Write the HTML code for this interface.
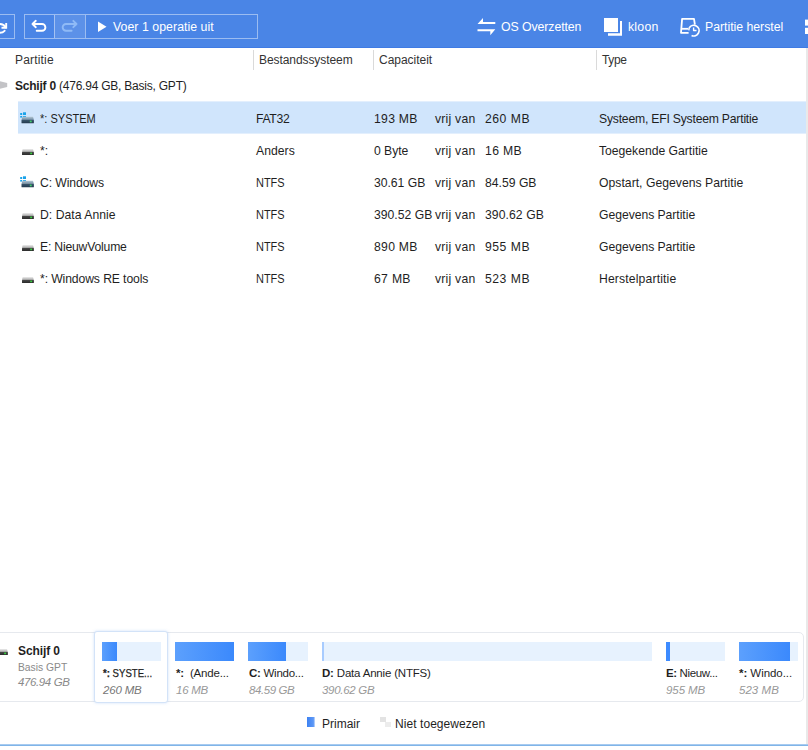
<!DOCTYPE html>
<html><head><meta charset="utf-8">
<style>
*{box-sizing:border-box;margin:0;padding:0}
html,body{width:808px;height:750px;overflow:hidden;background:#fff;font-family:"Liberation Sans",sans-serif;font-size:12px;color:#1f1f1f}
.a{position:absolute;white-space:nowrap}
#tb{position:absolute;left:0;top:0;width:808px;height:48px;background:#4a85e6;border-bottom:1px solid #3f7be4}
.btn{position:absolute;border:1px solid rgba(255,255,255,0.45)}
.wt{color:#fff;font-size:12.3px}
.hdr{color:#333;font-size:12px}
.hdr2{color:#1f1f1f;font-size:12px}
.sep{position:absolute;top:50px;width:1px;height:20px;background:#dadada}
.row{position:absolute;left:0;width:808px;height:32px}
.sel{background:#d0e5fc;height:33px;border-top:1px solid #e3effd;border-bottom:1px solid #e3effd}
.ic{position:absolute;left:18px}
.t{font-size:12.2px;color:#1f1f1f}
.bar{position:absolute;top:642px;height:19px;background:#e7f2fe}
.bar i{position:absolute;left:0;top:0;height:19px;background:linear-gradient(90deg,#5ca0fd,#3b89fc)}
.dn{font-size:12px;font-weight:bold;color:#1f1f1f}
.dg{font-size:11.5px;color:#8a8a8a}
.dgi{font-size:11.5px;color:#8a8a8a;font-style:italic}
.lbl{font-size:11.5px;color:#1f1f1f}
.sz{font-size:11.5px;color:#999;font-style:italic}
.sel2{color:#777}
.lg{font-size:12px;color:#1f1f1f}
</style></head><body>
<svg width="0" height="0" style="position:absolute">
<defs>
<linearGradient id="gt" x1="0" y1="0" x2="0" y2="1"><stop offset="0" stop-color="#b7c9d6"/><stop offset="1" stop-color="#7893a8"/></linearGradient>
<linearGradient id="gf" x1="0" y1="0" x2="0" y2="1"><stop offset="0" stop-color="#3d5a72"/><stop offset="1" stop-color="#243a4e"/></linearGradient>
<linearGradient id="ht" x1="0" y1="0" x2="0" y2="1"><stop offset="0" stop-color="#dcdcdc"/><stop offset="1" stop-color="#b4b4b4"/></linearGradient>
<linearGradient id="hf" x1="0" y1="0" x2="0" y2="1"><stop offset="0" stop-color="#4a4a4a"/><stop offset="1" stop-color="#2a2a2a"/></linearGradient>
<symbol id="wdisk" viewBox="0 0 18 16">
<rect x="2.2" y="5" width="2" height="2" fill="#1aa3ea"/><rect x="5" y="4.3" width="3" height="2.7" fill="#1aa3ea"/>
<rect x="2.2" y="8" width="2" height="1.6" fill="#1aa3ea"/><rect x="5" y="8" width="3" height="2.2" fill="#1aa3ea"/>
<path d="M4.4,8.7 H15 L15.8,11.4 H3.6 Z" fill="url(#gt)"/>
<rect x="3.5" y="11.4" width="12.4" height="3.9" rx="0.6" fill="url(#gf)"/>
<rect x="11.8" y="12.6" width="1.9" height="1.7" fill="#3fcf6a"/>
</symbol>
<symbol id="hdisk" viewBox="0 0 18 16">
<path d="M4.6,9.2 H15 L15.8,11.7 H4 Z" fill="url(#ht)"/>
<rect x="4" y="11.7" width="11.9" height="3.4" rx="0.5" fill="url(#hf)"/>
<rect x="12.2" y="12.6" width="1.9" height="1.6" fill="#36d03c"/>
</symbol>
</defs></svg>
<div id="tb">
  <div class="btn" style="left:-10px;top:14px;width:25px;height:25px"></div>
  <div class="btn" style="left:24px;top:14px;width:234px;height:25px"></div>
  <div style="position:absolute;left:54px;top:15px;width:31px;height:23px;background:rgba(255,255,255,0.1)"></div>
  <div style="position:absolute;left:54px;top:15px;width:1px;height:23px;background:rgba(255,255,255,0.45)"></div>
  <div style="position:absolute;left:85px;top:15px;width:1px;height:23px;background:rgba(255,255,255,0.45)"></div>
  <svg style="position:absolute;left:0;top:0" width="808" height="47" viewBox="0 0 808 47">
    <g fill="none" stroke="#fff" stroke-width="1.9" stroke-linecap="round" stroke-linejoin="round">
      <path d="M-1,24 Q3.5,23.6 5.6,27.2"/>
      <path d="M6.2,23 V27.8 H1.5" stroke-linecap="butt" stroke-linejoin="miter"/>
      <path d="M4.6,30.8 Q2.5,33 -1,32.8"/>
      <path d="M36.7,30.8 H42 A3.4,3.4 0 0 0 42,24 H32.5 M35.8,20.8 L32.5,24 L35.8,27.2"/>
    </g>
    <path d="M71.6,30.7 H66 A3.35,3.35 0 0 1 66,24 H76.5 M73.3,20.8 L76.5,24 L73.3,27.2" fill="none" stroke="#8fbaf6" stroke-width="1.9" stroke-linecap="round" stroke-linejoin="round"/>
    <path d="M98,21.5 L106.5,26.8 L98,32 Z" fill="#fff"/>
    <g fill="#fff">
      <path d="M477.5,24 L483,18 L483,22 L495.3,22 L495.3,24 Z"/>
      <path d="M477.5,29.2 L495.3,29.2 L490.3,35.3 L490.3,31.2 L477.5,31.2 Z"/>
      <rect x="604" y="18" width="14" height="14"/>
      <path d="M620,21 H622 V35.7 H608 V33.3 H620 Z"/>
    </g>
    <g fill="none" stroke="#fff" stroke-width="1.8" stroke-linejoin="round">
      <path d="M688.6,32.8 H681 L682.1,18.9 H694 L694.9,24.6"/>
      <path d="M681.5,28.8 H688.3"/>
      <path d="M689.2,27.95 A5.3,5.3 0 1 1 691.56,35.4" stroke-width="1.7"/>
      <path d="M689.3,27.7 L688.8,30.4" stroke-width="1.4"/>
      <path d="M693.6,27.6 V30.5 H696.5" stroke-width="1.4"/>
    </g>
    <rect x="805" y="19.6" width="4" height="6" fill="#fff"/>
    <rect x="805" y="27.8" width="4" height="6.2" fill="#fff"/>
  </svg>
</div>
<div class="sep" style="left:253px"></div>
<div class="sep" style="left:373px"></div>
<div class="sep" style="left:596px"></div>
<svg style="position:absolute;left:0;top:79px" width="10" height="12"><path d="M-3,1.5 L7.2,4 L7.2,8 L-3,10.5 Z" fill="#c3c3c6"/></svg>
<div class="row sel" style="top:101px;left:18px"></div>
<svg class="ic" style="top:107.7px" width="18" height="16"><use href="#wdisk"/></svg>
<svg class="ic" style="top:139.7px" width="18" height="16"><use href="#hdisk"/></svg>
<svg class="ic" style="top:171.7px" width="18" height="16"><use href="#wdisk"/></svg>
<svg class="ic" style="top:203.7px" width="18" height="16"><use href="#hdisk"/></svg>
<svg class="ic" style="top:235.7px" width="18" height="16"><use href="#hdisk"/></svg>
<svg class="ic" style="top:267.7px" width="18" height="16"><use href="#hdisk"/></svg>

<!-- disk map panel -->
<div style="position:absolute;left:-6px;top:632px;width:810px;height:70px;border:1px solid #e6e9ee;border-radius:5px"></div>
<div style="position:absolute;left:94px;top:631px;width:74px;height:72px;border:1px solid #d3e3f8;border-radius:3px;background:#fff;box-shadow:0 0 3px rgba(120,170,240,0.35)"></div>
<svg style="position:absolute;left:-8px;top:640px" width="18" height="16"><use href="#hdisk"/></svg>

<div class="bar" style="left:102px;width:59px"><i style="width:15px"></i></div>
<div class="bar" style="left:175px;width:59px"><i style="width:59px"></i></div>
<div class="bar" style="left:248px;width:60px"><i style="width:38px"></i></div>
<div class="bar" style="left:322px;width:330px"><i style="width:2px;background:#a8ccff"></i></div>
<div class="bar" style="left:666px;width:59px"><i style="width:4px;background:#3d8bff"></i></div>
<div class="bar" style="left:739px;width:59px"><i style="width:51px"></i></div>
<!-- legend -->
<div style="position:absolute;left:307px;top:717px;width:8px;height:10px;background:linear-gradient(90deg,#3d82f2,#5d98f6 80%,#cfe0fb)"></div>
<div style="position:absolute;left:380px;top:717px;width:6px;height:5px;background:#e3e3e3"></div>
<div style="position:absolute;left:385px;top:722px;width:6px;height:5px;background:#ececec"></div>
<div style="position:absolute;left:0;top:744px;width:808px;height:1px;background:#a8cbf0"></div><div style="position:absolute;left:0;top:745px;width:808px;height:1px;background:#80b5e8"></div>
<div id="tb1" class="a wt" style="left:113px;top:20px;letter-spacing:0.050px;">Voer 1 operatie uit</div>
<div id="tb2" class="a wt" style="left:501px;top:20px;letter-spacing:-0.075px;">OS Overzetten</div>
<div id="tb3" class="a wt" style="left:628px;top:20px;letter-spacing:0.225px;">kloon</div>
<div id="tb4" class="a wt" style="left:705px;top:20px;letter-spacing:-0.024px;">Partitie herstel</div>
<div id="h1" class="a hdr" style="left:15px;top:53px;letter-spacing:0.180px;">Partitie</div>
<div id="h2" class="a hdr" style="left:259px;top:53px;letter-spacing:-0.077px;">Bestandssysteem</div>
<div id="h3" class="a hdr" style="left:379px;top:53px;letter-spacing:-0.020px;">Capaciteit</div>
<div id="h4" class="a hdr" style="left:602px;top:53px;letter-spacing:-0.360px;">Type</div>
<div id="s0" class="a hdr2" style="left:15px;top:79px;letter-spacing:-0.226px;"><b>Schijf 0</b> (476.94 GB, Basis, GPT)</div>
<div id="r0a" class="a t" style="left:40px;top:112px;transform:scaleX(0.9052);transform-origin:0 0;">*: SYSTEM</div>
<div id="r0b" class="a t" style="left:256px;top:112px;letter-spacing:-0.315px;">FAT32</div>
<div id="r0c" class="a t" style="left:374px;top:112px;letter-spacing:0.288px;">193 MB</div>
<div id="r0d" class="a t" style="left:435px;top:112px;letter-spacing:0.231px;">vrij van</div>
<div id="r0e" class="a t" style="left:485px;top:112px;letter-spacing:0.504px;">260 MB</div>
<div id="r0f" class="a t" style="left:599px;top:112px;letter-spacing:-0.212px;">Systeem, EFI Systeem Partitie</div>
<div id="r1a" class="a t" style="left:40px;top:144px;letter-spacing:0.000px;">*:</div>
<div id="r1b" class="a t" style="left:256px;top:144px;letter-spacing:0.036px;">Anders</div>
<div id="r1c" class="a t" style="left:374px;top:144px;letter-spacing:-0.036px;">0 Byte</div>
<div id="r1d" class="a t" style="left:435px;top:144px;letter-spacing:0.231px;">vrij van</div>
<div id="r1e" class="a t" style="left:485px;top:144px;letter-spacing:0.360px;">16 MB</div>
<div id="r1f" class="a t" style="left:599px;top:144px;letter-spacing:-0.020px;">Toegekende Gartitie</div>
<div id="r2a" class="a t" style="left:40px;top:176px;letter-spacing:-0.100px;">C: Windows</div>
<div id="r2b" class="a t" style="left:256px;top:176px;letter-spacing:0.000px;transform:scaleX(0.9);transform-origin:0 0;">NTFS</div>
<div id="r2c" class="a t" style="left:374px;top:176px;letter-spacing:-0.026px;">30.61 GB</div>
<div id="r2d" class="a t" style="left:435px;top:176px;letter-spacing:0.231px;">vrij van</div>
<div id="r2e" class="a t" style="left:485px;top:176px;letter-spacing:0.000px;">84.59 GB</div>
<div id="r2f" class="a t" style="left:599px;top:176px;letter-spacing:0.022px;">Opstart, Gegevens Partitie</div>
<div id="r3a" class="a t" style="left:40px;top:208px;letter-spacing:0.030px;">D: Data Annie</div>
<div id="r3b" class="a t" style="left:256px;top:208px;letter-spacing:0.000px;transform:scaleX(0.9);transform-origin:0 0;">NTFS</div>
<div id="r3c" class="a t" style="left:374px;top:208px;letter-spacing:-0.000px;">390.52 GB</div>
<div id="r3d" class="a t" style="left:435px;top:208px;letter-spacing:0.231px;">vrij van</div>
<div id="r3e" class="a t" style="left:485px;top:208px;letter-spacing:0.067px;">390.62 GB</div>
<div id="r3f" class="a t" style="left:599px;top:208px;letter-spacing:-0.045px;">Gegevens Partitie</div>
<div id="r4a" class="a t" style="left:40px;top:240px;letter-spacing:-0.194px;">E: NieuwVolume</div>
<div id="r4b" class="a t" style="left:256px;top:240px;letter-spacing:0.000px;transform:scaleX(0.9);transform-origin:0 0;">NTFS</div>
<div id="r4c" class="a t" style="left:374px;top:240px;letter-spacing:0.288px;">890 MB</div>
<div id="r4d" class="a t" style="left:435px;top:240px;letter-spacing:0.231px;">vrij van</div>
<div id="r4e" class="a t" style="left:485px;top:240px;letter-spacing:0.504px;">955 MB</div>
<div id="r4f" class="a t" style="left:599px;top:240px;letter-spacing:-0.045px;">Gegevens Partitie</div>
<div id="r5a" class="a t" style="left:40px;top:272px;letter-spacing:-0.110px;">*: Windows RE tools</div>
<div id="r5b" class="a t" style="left:256px;top:272px;letter-spacing:0.000px;transform:scaleX(0.9);transform-origin:0 0;">NTFS</div>
<div id="r5c" class="a t" style="left:374px;top:272px;letter-spacing:0.315px;">67 MB</div>
<div id="r5d" class="a t" style="left:435px;top:272px;letter-spacing:0.231px;">vrij van</div>
<div id="r5e" class="a t" style="left:485px;top:272px;letter-spacing:0.504px;">523 MB</div>
<div id="r5f" class="a t" style="left:599px;top:272px;letter-spacing:0.141px;">Herstelpartitie</div>
<div id="d1" class="a dn" style="left:18px;top:644px;letter-spacing:-0.103px;">Schijf 0</div>
<div id="d2" class="a dg" style="left:18px;top:661px;transform:scaleX(0.8962);transform-origin:0 0;">Basis GPT</div>
<div id="d3" class="a dgi" style="left:18px;top:676px;letter-spacing:-0.383px;">476.94 GB</div>
<div id="l0" class="a lbl" style="left:103px;top:667px;transform:scaleX(0.8348);transform-origin:0 0;-webkit-text-stroke:0.25px #1f1f1f;"><b>*:</b> SYSTE...</div>
<div id="z0" class="a sz sel2" style="left:103px;top:684px;letter-spacing:-0.180px;">260 MB</div>
<div id="l1" class="a lbl" style="left:176px;top:667px;letter-spacing:-0.196px;"><b>*:</b>&nbsp; (Ande...</div>
<div id="z1" class="a sz" style="left:176px;top:684px;letter-spacing:-0.270px;">16 MB</div>
<div id="l2" class="a lbl" style="left:249px;top:667px;letter-spacing:-0.270px;"><b>C:</b> Windo...</div>
<div id="z2" class="a sz" style="left:249px;top:684px;letter-spacing:-0.411px;">84.59 GB</div>
<div id="l3" class="a lbl" style="left:322px;top:667px;letter-spacing:-0.189px;"><b>D:</b> Data Annie (NTFS)</div>
<div id="z3" class="a sz" style="left:322px;top:684px;letter-spacing:-0.293px;">390.62 GB</div>
<div id="l4" class="a lbl" style="left:666px;top:667px;letter-spacing:-0.360px;"><b>E:</b> Nieuw...</div>
<div id="z4" class="a sz" style="left:666px;top:684px;letter-spacing:-0.072px;">955 MB</div>
<div id="l5" class="a lbl" style="left:739px;top:667px;letter-spacing:-0.054px;"><b>*:</b> Windo...</div>
<div id="z5" class="a sz" style="left:739px;top:684px;letter-spacing:0.036px;">523 MB</div>
<div id="lg1" class="a lg" style="left:322px;top:717px;letter-spacing:0.000px;">Primair</div>
<div id="lg2" class="a lg" style="left:395px;top:717px;letter-spacing:0.064px;">Niet toegewezen</div>
<div style="position:absolute;left:806px;top:48px;width:2px;height:696px;background:#e9e9e9"></div>
</body></html>
